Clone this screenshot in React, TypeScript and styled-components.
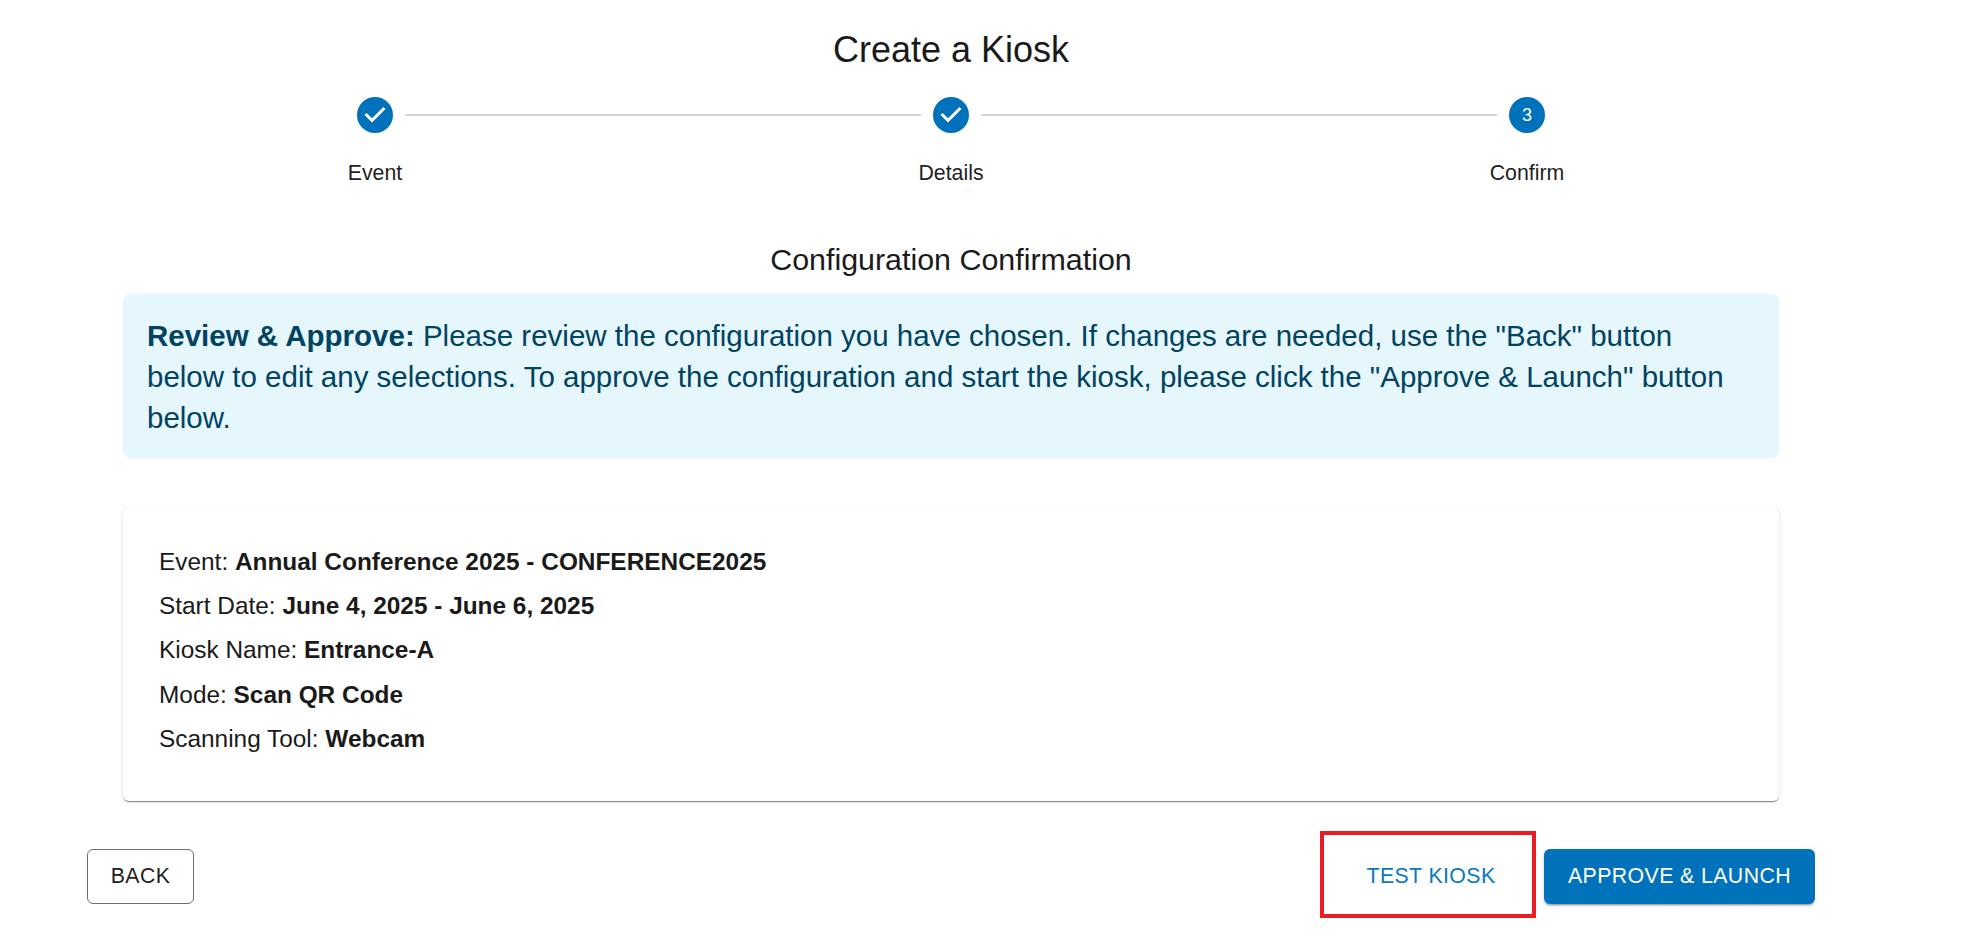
import React from "react";
import styled, { createGlobalStyle } from "styled-components";

const GlobalStyle = createGlobalStyle`
  html, body {
    margin: 0;
    padding: 0;
    background: #fff;
  }
  body {
    font-family: "Liberation Sans", Arial, sans-serif;
    color: #1a1a1a;
  }
`;

const steps = ["Event", "Details", "Confirm"];

const details = [
  { label: "Event", value: "Annual Conference 2025 - CONFERENCE2025" },
  { label: "Start Date", value: "June 4, 2025 - June 6, 2025" },
  { label: "Kiosk Name", value: "Entrance-A" },
  { label: "Mode", value: "Scan QR Code" },
  { label: "Scanning Tool", value: "Webcam" },
];

const CheckCircle = () => (
  <svg width="36" height="36" viewBox="0 0 24 24" fill="#0072bc">
    <path d="M12 0a12 12 0 1 0 0 24 12 12 0 0 0 0-24zm-2 17l-5-5 1.4-1.4 3.6 3.6 7.6-7.6L19 8l-9 9z" />
  </svg>
);

const App = () => {
  return (
    <Page>
      <GlobalStyle />
      <Title>Create a Kiosk</Title>

      <StepTrack>
        <CheckCircle />
        <Connector />
        <CheckCircle />
        <Connector />
        <StepNumber>3</StepNumber>
      </StepTrack>
      <StepLabels>
        {steps.map((s) => (
          <StepLabel key={s}>{s}</StepLabel>
        ))}
      </StepLabels>

      <Subtitle>Configuration Confirmation</Subtitle>

      <Alert>
        <strong>Review &amp; Approve:</strong> Please review the configuration
        you have chosen. If changes are needed, use the "Back" button below to
        edit any selections. To approve the configuration and start the kiosk,
        please click the "Approve &amp; Launch" button below.
      </Alert>

      <Card>
        {details.map((d) => (
          <DetailRow key={d.label}>
            {d.label}: <b>{d.value}</b>
          </DetailRow>
        ))}
      </Card>

      <Actions>
        <BackButton>Back</BackButton>
        <RightActions>
          <Highlight>
            <TestButton>Test Kiosk</TestButton>
          </Highlight>
          <ApproveButton>Approve &amp; Launch</ApproveButton>
        </RightActions>
      </Actions>
    </Page>
  );
};

export default App;

const Page = styled.div`
  width: 1728px;
  height: 950px;
  margin-left: 87px;
  overflow: hidden;
`;

const Title = styled.h1`
  margin: 0;
  padding-top: 29px;
  height: 69px;
  box-sizing: border-box;
  text-align: center;
  font-size: 36px;
  line-height: 41px;
  font-weight: 400;
  color: #1a1a1a;
`;

const StepTrack = styled.div`
  display: flex;
  align-items: center;
  height: 36px;
  margin-top: 28px;
  padding: 0 270px;
`;

const Connector = styled.div`
  flex: 1;
  height: 2px;
  margin: 0 12px;
  background: #d4d4d4;
`;

const StepNumber = styled.div`
  width: 36px;
  height: 36px;
  flex: none;
  border-radius: 50%;
  display: flex;
  align-items: center;
  justify-content: center;
  background: #0072bc;
  color: #fff;
  font-size: 18px;
`;

const StepLabels = styled.div`
  display: grid;
  grid-template-columns: repeat(3, 1fr);
  margin-top: 28px;
`;

const StepLabel = styled.div`
  text-align: center;
  font-size: 21.3px;
  line-height: 24px;
  color: #1f1f1f;
`;

const Subtitle = styled.h2`
  margin: 56px 0 0;
  text-align: center;
  font-size: 30.4px;
  line-height: 36px;
  font-weight: 400;
  color: #1a1a1a;
`;

const Alert = styled.div`
  margin: 17px 36px 0;
  padding: 21px 32px 20px 24px;
  border-radius: 6px;
  background: #e5f6fd;
  color: #014361;
  font-size: 29.5px;
  line-height: 41px;
`;

const Card = styled.div`
  margin: 49px 36px 0;
  height: 294px;
  box-sizing: border-box;
  padding: 33px 36px;
  border-radius: 6px;
  background: #fff;
  box-shadow: 0 2px 1px -1px rgba(0, 0, 0, 0.3), 0 1px 1px 0 rgba(0, 0, 0, 0.2),
    0 1px 4px 0 rgba(0, 0, 0, 0.12);
`;

const DetailRow = styled.div`
  font-size: 24.4px;
  line-height: 44.2px;
  color: #1a1a1a;
  b {
    font-weight: 700;
  }
`;

const Actions = styled.div`
  display: flex;
  align-items: center;
  justify-content: space-between;
  margin-top: 30px;
`;

const RightActions = styled.div`
  display: flex;
  align-items: center;
  gap: 8px;
`;

const BaseButton = styled.button`
  height: 55px;
  box-sizing: border-box;
  border-radius: 6px;
  font-family: "Liberation Sans", Arial, sans-serif;
  font-size: 21.3px;
  letter-spacing: 0.4px;
  text-transform: uppercase;
  cursor: pointer;
`;

const BackButton = styled(BaseButton)`
  width: 107px;
  padding: 0;
  background: #fff;
  color: #1f1f1f;
  border: 1.5px solid #6f6f6f;
`;

const Highlight = styled.div`
  width: 216px;
  height: 87px;
  box-sizing: border-box;
  margin-bottom: 4px;
  padding: 4px 0 0 6px;
  border: 4px solid #ec1c24;
  display: flex;
  align-items: center;
  justify-content: center;
`;

const TestButton = styled(BaseButton)`
  padding: 0;
  background: transparent;
  border: none;
  color: #0a78c0;
`;

const ApproveButton = styled(BaseButton)`
  width: 271px;
  padding: 0;
  background: #0072bc;
  color: #fff;
  border: none;
  box-shadow: 0 3px 1px -2px rgba(0, 0, 0, 0.2), 0 2px 2px 0 rgba(0, 0, 0, 0.14),
    0 1px 5px 0 rgba(0, 0, 0, 0.12);
`;
